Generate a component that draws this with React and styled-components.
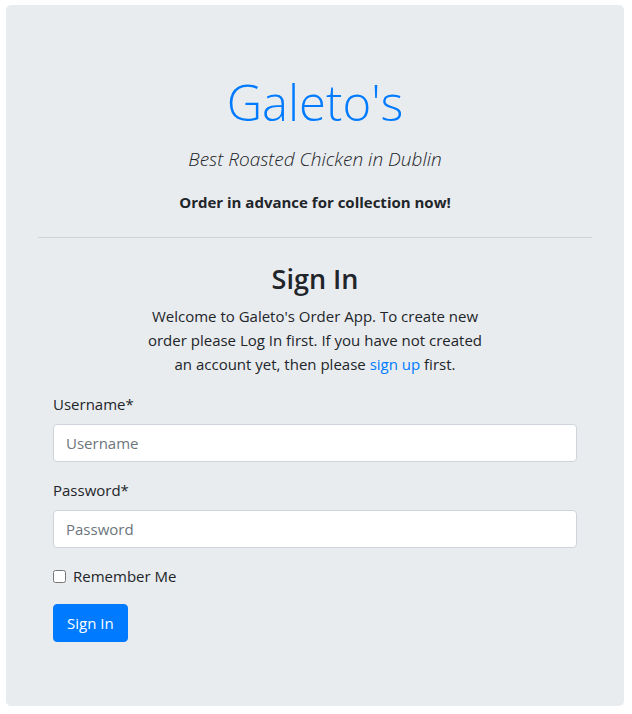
import React from "react";
import styled, { createGlobalStyle } from "styled-components";

const GlobalStyle = createGlobalStyle`
  * { box-sizing: border-box; }
  body {
    margin: 0;
    font-family: "Open Sans", "Noto Sans", sans-serif;
    font-size: 15px;
    line-height: 24px;
    color: #212529;
    background: #fff;
  }
`;

const Page = styled.div`
  padding: 5px 8px 8px 6px;
`;

const Jumbotron = styled.section`
  background: #e9ecef;
  border-radius: 5px;
  padding: 64px 32px;
`;

const Header = styled.div`
  text-align: center;
`;

const Brand = styled.h1`
  margin: 0 0 8px;
  font-size: 49px;
  font-weight: 300;
  line-height: 67px;
  color: #007bff;
`;

const Lead = styled.p`
  margin: 0 0 16px;
  font-size: 19px;
  line-height: 30px;
  font-weight: 300;
  font-style: italic;
`;

const Notice = styled.p`
  margin: 0;
  font-weight: 700;
`;

const Rule = styled.hr`
  margin: 23px 0 24px;
  border: 0;
  border-top: 1px solid rgba(0, 0, 0, 0.1);
`;

const FormArea = styled.div`
  padding: 0 15px;
`;

const Title = styled.h3`
  margin: 0 0 8px;
  text-align: center;
  font-size: 27px;
  font-weight: 600;
  line-height: 34px;
`;

const Intro = styled.p`
  max-width: 345px;
  margin: 0 auto 16px;
  text-align: center;
`;

const Link = styled.a`
  color: #007bff;
  text-decoration: none;
`;

const Group = styled.div`
  margin-bottom: 16px;
`;

const Label = styled.label`
  display: block;
  margin-bottom: 8px;
`;

const Input = styled.input`
  display: block;
  width: 100%;
  height: 38px;
  padding: 6px 12px;
  font: inherit;
  color: #495057;
  background: #fff;
  border: 1px solid #ced4da;
  border-radius: 4px;
  &::placeholder { color: #6c757d; }
`;

const Check = styled.label`
  display: flex;
  align-items: center;
  gap: 7px;
  margin-bottom: 16px;
  input { margin: 0; width: 13px; height: 13px; }
`;

const Button = styled.button`
  height: 38px;
  padding: 6px 13px;
  font: inherit;
  color: #fff;
  background: #007bff;
  border: 1px solid #007bff;
  border-radius: 4px;
`;

export default function App() {
  return (
    <Page>
      <GlobalStyle />
      <Jumbotron>
        <Header>
          <Brand>Galeto's</Brand>
          <Lead>Best Roasted Chicken in Dublin</Lead>
          <Notice>Order in advance for collection now!</Notice>
        </Header>
        <Rule />
        <FormArea>
          <Title>Sign In</Title>
          <Intro>
            Welcome to Galeto's Order App. To create new order please Log In
            first. If you have not created an account yet, then please{" "}
            <Link href="#">sign up</Link> first.
          </Intro>
          <Group>
            <Label>Username*</Label>
            <Input type="text" placeholder="Username" />
          </Group>
          <Group>
            <Label>Password*</Label>
            <Input type="password" placeholder="Password" />
          </Group>
          <Check>
            <input type="checkbox" />
            Remember Me
          </Check>
          <Button type="submit">Sign In</Button>
        </FormArea>
      </Jumbotron>
    </Page>
  );
}
